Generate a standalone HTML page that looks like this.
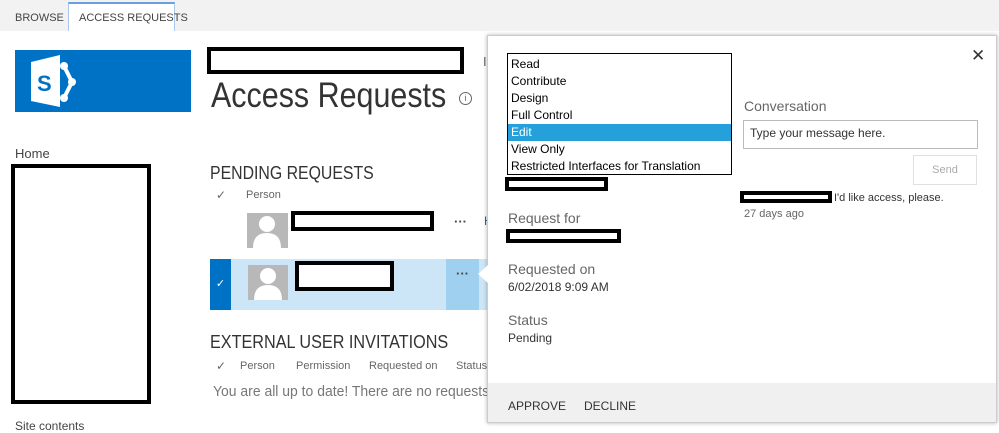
<!DOCTYPE html><html><head><style>
body{margin:0;width:999px;height:425px;overflow:hidden;background:#fff;font-family:"Liberation Sans",sans-serif;position:relative}
.a{position:absolute}
.bx{position:absolute;border:4px solid #000;background:#fff;box-sizing:border-box}
.g{color:#666}
.sx{transform-origin:0 0;white-space:nowrap}
</style></head><body>
<div class="a" style="left:0;top:0;width:999px;height:31px;background:#f2f2f2"></div>
<div class="a" style="left:15px;top:12px;font-size:11px;color:#444">BROWSE</div>
<div class="a" style="left:68px;top:2px;width:107px;height:29px;background:#fff;border:1px solid #aac8ec;border-top:2px solid #6aa0e0;border-bottom:none;box-sizing:border-box"></div>
<div class="a" style="left:79px;top:12px;font-size:11px;color:#444">ACCESS REQUESTS</div>
<div class="a" style="left:15px;top:50px;width:176px;height:62px;background:#0072c6"></div>
<svg class="a" style="left:28px;top:54px" width="60" height="55"><path d="M3 8 L32 1 L32 53 L3 47Z" fill="#fff"/><text x="9" y="37" font-size="22" font-weight="bold" fill="#0072c6" font-family="Liberation Sans">S</text><path d="M36 12 L44 28 L36 44" stroke="#fff" stroke-width="4" fill="none"/><circle cx="36" cy="12" r="4" fill="#fff"/><circle cx="44" cy="28" r="4" fill="#fff"/><circle cx="36" cy="44" r="4" fill="#fff"/></svg>
<div class="bx" style="left:207px;top:47px;width:257px;height:27px"></div>
<div class="a" style="left:483px;top:54px;font-size:13px;color:#666">I</div>
<div class="a sx" style="left:211px;top:76px;font-size:35px;font-weight:300;color:#333;transform:scaleX(0.87)">Access Requests</div>
<div class="a" style="left:459px;top:92px;width:11px;height:11px;border:1px solid #666;border-radius:50%;font-size:9px;text-align:center;line-height:11px;color:#666">i</div>
<div class="a" style="left:15px;top:146px;font-size:13px;color:#444">Home</div>
<div class="bx" style="left:11px;top:164px;width:140px;height:240px"></div>
<div class="a" style="left:15px;top:419px;font-size:12px;color:#444">Site contents</div>
<div class="a sx" style="left:210px;top:163px;font-size:18px;color:#333;transform:scaleX(0.88)">PENDING REQUESTS</div>
<div class="a g" style="left:216px;top:188px;font-size:12px">✓</div>
<div class="a g" style="left:246px;top:189px;font-size:11px">Person</div>
<div class="a" style="left:247px;top:213px;width:41px;height:35px;background:#b8b8b8"><svg width="41" height="35"><circle cx="20" cy="11" r="8" fill="#fff"/><path d="M6 35 Q6 20 20 20 Q34 20 34 35Z" fill="#fff"/></svg></div>
<div class="bx" style="left:291px;top:211px;width:143px;height:20px"></div>
<div class="a" style="left:454px;top:214px;font-size:13px;color:#444;font-weight:bold">···</div>
<div class="a" style="left:484px;top:214px;font-size:12px;color:#0072c6">H</div>
<div class="a" style="left:210px;top:259px;width:277px;height:51px;background:#cde6f7"></div>
<div class="a" style="left:210px;top:259px;width:21px;height:51px;background:#0072c6;color:#fff;font-size:11px;text-align:center;line-height:51px">✓</div>
<div class="a" style="left:446px;top:259px;width:33px;height:51px;background:#9fd0f0;text-align:center;font-size:13px;font-weight:bold;color:#444;line-height:30px">···</div>
<div class="a" style="left:248px;top:265px;width:40px;height:35px;background:#b8b8b8"><svg width="40" height="35"><circle cx="20" cy="11" r="8" fill="#fff"/><path d="M6 35 Q6 20 20 20 Q34 20 34 35Z" fill="#fff"/></svg></div>
<div class="bx" style="left:295px;top:261px;width:99px;height:30px"></div>
<div class="a sx" style="left:210px;top:332px;font-size:18px;color:#333;transform:scaleX(0.9)">EXTERNAL USER INVITATIONS</div>
<div class="a g" style="left:216px;top:359px;font-size:12px">✓</div>
<div class="a g" style="left:240px;top:360px;font-size:11px">Person</div>
<div class="a g" style="left:296px;top:360px;font-size:11px">Permission</div>
<div class="a g" style="left:369px;top:360px;font-size:11px">Requested on</div>
<div class="a g" style="left:456px;top:360px;font-size:11px">Status</div>
<div class="a" style="left:213px;top:383px;font-size:15px;color:#777;white-space:nowrap;width:274px;overflow:hidden"><span style="display:inline-block;transform:scaleX(0.93);transform-origin:0 0">You are all up to date! There are no requests</span></div>
<!-- popup -->
<div class="a" style="left:487px;top:35px;width:510px;height:388px;background:#fff;border:1px solid #ccc;box-shadow:0 0 4px rgba(0,0,0,.3);box-sizing:border-box"></div>
<div class="a" style="left:478px;top:265px;width:0;height:0;border-top:9px solid transparent;border-bottom:9px solid transparent;border-right:10px solid #fff"></div>
<div class="a" style="left:488px;top:383px;width:508px;height:39px;background:#f0f0f0"></div>
<div class="a" style="left:508px;top:399px;font-size:12px;color:#333">APPROVE</div>
<div class="a" style="left:584px;top:399px;font-size:12px;color:#333">DECLINE</div>
<div class="a" style="left:971px;top:46px;font-size:17px;color:#333">✕</div>
<div class="a" style="left:507px;top:53px;width:225px;height:122px;border:1px solid #000;box-sizing:border-box;font-size:12px;color:#000;line-height:17px;padding-top:2px">
<div style="padding-left:3px">Read</div><div style="padding-left:3px">Contribute</div><div style="padding-left:3px">Design</div><div style="padding-left:3px">Full Control</div><div style="padding-left:3px;background:#26a0da;color:#fff">Edit</div><div style="padding-left:3px">View Only</div><div style="padding-left:3px">Restricted Interfaces for Translation</div></div>
<div class="bx" style="left:505px;top:177px;width:103px;height:14px"></div>
<div class="a g" style="left:744px;top:98px;font-size:14px">Conversation</div>
<div class="a" style="left:743px;top:120px;width:235px;height:29px;border:1px solid #bbb;box-sizing:border-box;font-size:12px;color:#333;padding:5px 6px">Type your message here.</div>
<div class="a" style="left:913px;top:155px;width:64px;height:30px;border:1px solid #e0e0e0;box-sizing:border-box;font-size:11px;color:#aaa;text-align:center;line-height:28px">Send</div>
<div class="bx" style="left:740px;top:191px;width:92px;height:12px"></div>
<div class="a" style="left:834px;top:192px;font-size:11px;color:#333">I'd like access, please.</div>
<div class="a g" style="left:744px;top:208px;font-size:11px">27 days ago</div>
<div class="a g" style="left:508px;top:210px;font-size:14px">Request for</div>
<div class="bx" style="left:506px;top:229px;width:115px;height:14px"></div>
<div class="a g" style="left:508px;top:261px;font-size:14px">Requested on</div>
<div class="a" style="left:508px;top:280px;font-size:12px;color:#333">6/02/2018 9:09 AM</div>
<div class="a g" style="left:508px;top:312px;font-size:14px">Status</div>
<div class="a" style="left:508px;top:331px;font-size:12px;color:#333">Pending</div>
</body></html>
